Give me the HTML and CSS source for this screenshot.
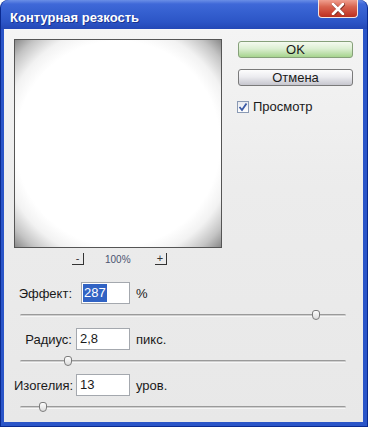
FILE: index.html
```html
<!DOCTYPE html>
<html lang="ru">
<head>
    <meta charset="UTF-8">
    <title>Контурная резкость</title>
    <link rel="stylesheet" href="styles.css">
</head>
<body>
    <div class="window">
        <div class="titlebar">
            <span class="title">Контурная резкость</span>
            <span class="close">
                <svg width="14" height="12" viewBox="0 0 14 12">
                    <path d="M2 1 L12 11 M12 1 L2 11" stroke="#7a2a20" stroke-width="3.4" stroke-linecap="round" transform="translate(0.5,0.5)"/>
                    <path d="M2 1 L12 11 M12 1 L2 11" stroke="#fff" stroke-width="2.6" stroke-linecap="round"/>
                </svg>
            </span>
        </div>
        <div class="content">
            <div class="top">
                <div class="preview-col">
                    <div class="preview"></div>
                    <div class="zoom">
                        <span class="zbtn">-</span>
                        <span class="zval">100%</span>
                        <span class="zbtn">+</span>
                    </div>
                </div>
                <div class="side">
                    <div class="btn ok">OK</div>
                    <div class="btn">Отмена</div>
                    <div class="check">
                        <span class="box">
                            <svg width="10" height="10" viewBox="0 0 10 10">
                                <path d="M1.5 5 L4 8 L8.5 1.5" fill="none" stroke="#3b5aa6" stroke-width="1.8"/>
                            </svg>
                        </span>
                        <span>Просмотр</span>
                    </div>
                </div>
            </div>

            <div class="params">
                <div class="row">
                    <span class="label">Эффект:</span>
                    <div class="field first"><span class="sel">287</span></div>
                    <span class="unit">%</span>
                </div>
                <div class="slider"><span class="thumb" style="left: 292px"></span></div>

                <div class="row">
                    <span class="label">Радиус:</span>
                    <div class="field">2,8</div>
                    <span class="unit">пикс.</span>
                </div>
                <div class="slider"><span class="thumb" style="left: 44px"></span></div>

                <div class="row">
                    <span class="label">Изогелия:</span>
                    <div class="field">13</div>
                    <span class="unit">уров.</span>
                </div>
                <div class="slider"><span class="thumb" style="left: 19px"></span></div>
            </div>
        </div>
    </div>
</body>
</html>
```

FILE: styles.css
```css
html, body {
    margin: 0;
    background: #fff;
}
body {
    font-family: "Liberation Sans", Arial, sans-serif;
    font-size: 13px;
    color: #1a1a1a;
}
.window {
    width: 368px;
    height: 427px;
    box-sizing: border-box;
    display: flex;
    flex-direction: column;
    background: #2a55c8;
    border-radius: 8px 8px 0 0;
    border: 1px solid #0a2a90;
    border-top: none;
    overflow: hidden;
}
.titlebar {
    height: 29px;
    flex: none;
    display: flex;
    align-items: flex-start;
    justify-content: space-between;
    background: linear-gradient(#6a8ee6 0, #3f68d8 4px, #3560d0 12px, #2c55c6 22px, #2448b6 29px);
    border-radius: 8px 8px 0 0;
}
.title {
    color: #fff;
    font-weight: bold;
    font-size: 13px;
    margin: 10px 0 0 9px;
    text-shadow: 1px 1px 0 #1a3490;
}
.close {
    width: 40px;
    height: 18px;
    margin: 0 9px 0 0;
    box-sizing: border-box;
    display: flex;
    align-items: center;
    justify-content: center;
    background: linear-gradient(#f0a090, #d86450 40%, #c84030 80%, #b83020);
    border: 1px solid #f4e4e0;
    border-top: none;
    border-radius: 0 0 4px 4px;
}
.content {
    flex: 1;
    margin: 0 4px 4px 3px;
    padding: 9px 0 0 10px;
    background: linear-gradient(#f4f4f4, #ececec 40%, #e8e8e8);
    border-top: 1px solid #f8f8f8;
}
.top {
    display: flex;
}
.preview-col {
    width: 208px;
}
.preview {
    width: 208px;
    height: 209px;
    box-sizing: border-box;
    border: 1px solid #555;
    background: radial-gradient(ellipse farthest-corner at center, #fff 70%, #f2f2f2 80%, #c4c4c4 91%, #8a8a8a 100%);
}
.zoom {
    display: flex;
    align-items: center;
    margin: 5px 0 0 58px;
    height: 12px;
}
.zbtn {
    width: 12px;
    height: 12px;
    box-sizing: border-box;
    border-right: 1px solid #333;
    border-bottom: 1px solid #333;
    font-size: 11px;
    line-height: 10px;
    text-align: center;
    color: #333;
}
.zval {
    font-size: 10px;
    color: #4a5470;
    margin: 0 24px 0 21px;
}
.side {
    margin-left: 16px;
    width: 115px;
    display: flex;
    flex-direction: column;
}
.btn {
    height: 17px;
    box-sizing: border-box;
    border: 1px solid #7a7a7a;
    border-radius: 3px;
    text-align: center;
    line-height: 15px;
    background: linear-gradient(#fdfdfd, #ececf0 45%, #c6c6ce);
    margin-bottom: 11px;
}
.btn.ok {
    margin-top: 2px;
    border-color: #86a07a;
    background: linear-gradient(#f4faf0, #dcefd2 45%, #a6d48e);
}
.check {
    display: flex;
    align-items: center;
    gap: 4px;
    margin-top: 2px;
    margin-left: -1px;
}
.box {
    width: 12px;
    height: 12px;
    box-sizing: border-box;
    border: 1px solid #8a9ab4;
    background: linear-gradient(#e8eaf0, #fff);
    display: flex;
    align-items: center;
    justify-content: center;
}
.params {
    margin-top: 17px;
    margin-right: 17px;
}
.row {
    display: flex;
    align-items: center;
    height: 22px;
    margin-top: 2px;
}
.label {
    width: 58px;
    text-align: right;
    white-space: nowrap;
}
.field {
    width: 54px;
    height: 22px;
    box-sizing: border-box;
    margin-left: 4px;
    padding: 0 3px;
    border: 1px solid #a4a8ae;
    background: #fff;
    line-height: 20px;
}
.field.first {
    width: 49px;
    margin-left: 9px;
    padding-left: 1px;
}
.sel {
    background: #3163c4;
    color: #fff;
    padding: 1px 1px 2px;
}
.unit {
    margin-left: 6px;
}
.slider {
    position: relative;
    height: 22px;
    margin-left: 6px;
}
.slider::before {
    content: "";
    position: absolute;
    left: 0;
    right: 0;
    top: 10px;
    height: 3px;
    box-sizing: border-box;
    border-radius: 2px;
    border-top: 1px solid #9a9a9a;
    background: #cfcfcf;
    border-bottom: 1px solid #f6f6f6;
}
.thumb {
    position: absolute;
    top: 6px;
    width: 8px;
    height: 10px;
    box-sizing: border-box;
    border: 1px solid #7c7c7c;
    border-radius: 3px 3px 4px 4px;
    background: linear-gradient(#fdfdfd, #dcdcdc);
}
```
